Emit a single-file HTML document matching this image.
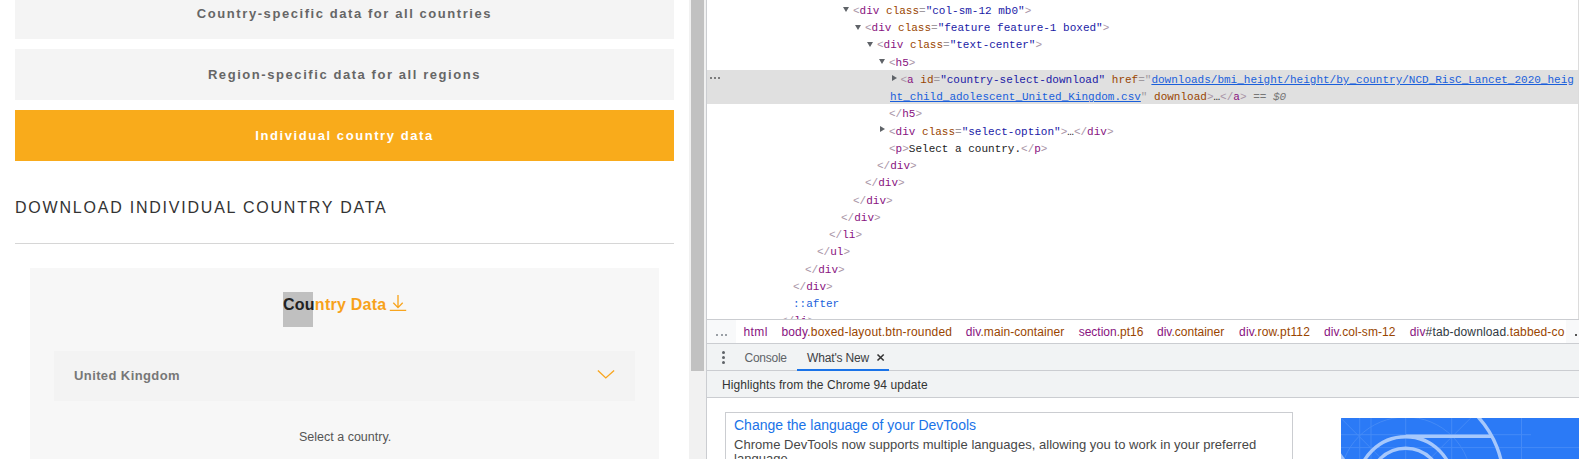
<!DOCTYPE html>
<html><head><meta charset="utf-8">
<style>
*{margin:0;padding:0;box-sizing:border-box}
html,body{width:1579px;height:459px;overflow:hidden;background:#fff;position:relative;font-family:"Liberation Sans",sans-serif}
.abs{position:absolute}
/* left page */
.btn{position:absolute;left:15px;width:659px;height:51px;background:#f4f4f4}
.btn span{position:absolute;left:0;right:0;text-align:center;font-weight:bold;font-size:13px;letter-spacing:1.57px;color:#666;white-space:nowrap;line-height:14px}
.btn.on{background:#f9ab1b}
.btn.on span{color:#fff}
.h4{position:absolute;left:15px;top:198px;font-size:16px;letter-spacing:1.78px;color:#333;line-height:20px;white-space:nowrap}
.hr{position:absolute;left:15px;top:243px;width:659px;height:1px;background:#d6d6d6}
.panel{position:absolute;left:30px;top:268px;width:629px;height:191px;background:#f7f7f7}
.sel{position:absolute;left:54px;top:351px;width:581px;height:50px;background:#f3f3f3}
/* scrollbar */
.sb{position:absolute;left:689px;top:0;width:17px;height:459px;background:#f1f1f1}
.thumb{position:absolute;left:691px;top:0;width:13px;height:371px;background:#c1c1c1}
.dvb{position:absolute;left:706px;top:0;width:1px;height:459px;background:#cbcdd1}
/* devtools tree */
.row{position:absolute;font-family:"Liberation Mono",monospace;font-size:11px;line-height:14px;white-space:pre;color:#222}
.b{color:#a894a6}
.t{color:#881280}
.an{color:#994500}
.eq{color:#a09a9f}
.av{color:#1a1aa6}
.lk{color:#1a5fdb;text-decoration:underline}
.eq2{color:#777}
.eq2 i{font-style:italic}
.ps{color:#1a5fdb}
.tx{color:#222}
.tri-d{position:absolute;width:0;height:0;border-left:3.4px solid transparent;border-right:3.4px solid transparent;border-top:5.2px solid #5f6368}
.tri-r{position:absolute;width:0;height:0;border-top:3.7px solid transparent;border-bottom:3.7px solid transparent;border-left:5.3px solid #5f6368}
.selrow{position:absolute;left:707px;top:70px;width:871px;height:34px;background:#e0e0e0}
.ui{position:absolute;font-size:12px;line-height:14px;white-space:nowrap}
</style></head><body>

<!-- LEFT PAGE -->
<div class="btn" style="top:-12px"><span style="top:19px">Country-specific data for all countries</span></div>
<div class="btn" style="top:49px"><span style="top:19px">Region-specific data for all regions</span></div>
<div class="btn on" style="top:110px"><span style="top:19px">Individual country data</span></div>
<div class="h4">DOWNLOAD INDIVIDUAL COUNTRY DATA</div>
<div class="hr"></div>
<div class="panel"></div>
<div class="abs" style="left:283px;top:292px;width:30px;height:35px;background:#c0c0c0"></div>
<div class="abs" style="left:283px;top:296px;font-size:16px;font-weight:bold;line-height:18px;letter-spacing:0.25px;color:#f7a21b;white-space:nowrap"><span style="color:#222">Cou</span>ntry Data</div>
<svg class="abs" style="left:388px;top:293px" width="20" height="20" viewBox="0 0 20 20"><path d="M10 2V14.6M5.3 9.8L10 14.6L14.7 9.8M1.8 17.4H18.2" stroke="#f8a51f" stroke-width="1.35" fill="none"/></svg>
<div class="sel"></div>
<div class="abs" style="left:74px;top:369px;font-size:13px;font-weight:bold;line-height:14px;color:#777;letter-spacing:0.4px;white-space:nowrap">United Kingdom</div>
<svg class="abs" style="left:596px;top:368px" width="20" height="12" viewBox="0 0 20 12"><path d="M1.9 2.4L9.8 9.9L18.1 2.4" stroke="#f8a51f" stroke-width="1.35" fill="none"/></svg>
<div class="abs" style="left:299px;top:430px;font-size:12.5px;line-height:14px;color:#555;white-space:nowrap">Select a country.</div>

<!-- SCROLLBAR -->
<div class="sb"></div>
<div class="thumb"></div>
<div class="dvb"></div>

<!-- DEVTOOLS -->
<div class="selrow"></div>
<div class="abs" style="left:709.5px;top:77.4px;width:2px;height:2px;border-radius:50%;background:#5a5a5a"></div>
<div class="abs" style="left:713.6px;top:77.4px;width:2px;height:2px;border-radius:50%;background:#5a5a5a"></div>
<div class="abs" style="left:717.7px;top:77.4px;width:2px;height:2px;border-radius:50%;background:#5a5a5a"></div>
<div class="row" style="left:853.0px;top:3.97px"><span class="b">&lt;</span><span class="t">div</span> <span class="an">class</span><span class="eq">=</span><span class="av">"col-sm-12 mb0"</span><span class="b">&gt;</span></div>
<div class="tri-d" style="left:843.0px;top:7.40px"></div>
<div class="row" style="left:865.0px;top:21.22px"><span class="b">&lt;</span><span class="t">div</span> <span class="an">class</span><span class="eq">=</span><span class="av">"feature feature-1 boxed"</span><span class="b">&gt;</span></div>
<div class="tri-d" style="left:855.0px;top:24.65px"></div>
<div class="row" style="left:877.0px;top:38.47px"><span class="b">&lt;</span><span class="t">div</span> <span class="an">class</span><span class="eq">=</span><span class="av">"text-center"</span><span class="b">&gt;</span></div>
<div class="tri-d" style="left:867.0px;top:41.90px"></div>
<div class="row" style="left:889.0px;top:55.72px"><span class="b">&lt;</span><span class="t">h5</span><span class="b">&gt;</span></div>
<div class="tri-d" style="left:879.0px;top:59.15px"></div>
<div class="row" style="left:900.5px;top:72.97px"><span class="b">&lt;</span><span class="t">a</span> <span class="an">id</span><span class="eq">=</span><span class="av">"country-select-download"</span> <span class="an">href</span><span class="eq">="</span><span class="lk">downloads/bmi_height/height/by_country/NCD_RisC_Lancet_2020_heig</span></div>
<div class="tri-r" style="left:891.5px;top:74.60px"></div>
<div class="row" style="left:890.0px;top:90.22px"><span class="lk">ht_child_adolescent_United_Kingdom.csv</span><span class="eq">"</span> <span class="an">download</span><span class="b">&gt;</span>…<span class="b">&lt;/</span><span class="t">a</span><span class="b">&gt;</span> <span class="eq2">== <i>$0</i></span></div>
<div class="row" style="left:889.0px;top:107.47px"><span class="b">&lt;/</span><span class="t">h5</span><span class="b">&gt;</span></div>
<div class="row" style="left:889.0px;top:124.72px"><span class="b">&lt;</span><span class="t">div</span> <span class="an">class</span><span class="eq">=</span><span class="av">"select-option"</span><span class="b">&gt;</span>…<span class="b">&lt;/</span><span class="t">div</span><span class="b">&gt;</span></div>
<div class="tri-r" style="left:880.0px;top:126.35px"></div>
<div class="row" style="left:889.0px;top:141.97px"><span class="b">&lt;</span><span class="t">p</span><span class="b">&gt;</span><span class="tx">Select a country.</span><span class="b">&lt;/</span><span class="t">p</span><span class="b">&gt;</span></div>
<div class="row" style="left:877.0px;top:159.22px"><span class="b">&lt;/</span><span class="t">div</span><span class="b">&gt;</span></div>
<div class="row" style="left:865.0px;top:176.47px"><span class="b">&lt;/</span><span class="t">div</span><span class="b">&gt;</span></div>
<div class="row" style="left:853.0px;top:193.72px"><span class="b">&lt;/</span><span class="t">div</span><span class="b">&gt;</span></div>
<div class="row" style="left:841.0px;top:210.97px"><span class="b">&lt;/</span><span class="t">div</span><span class="b">&gt;</span></div>
<div class="row" style="left:829.0px;top:228.22px"><span class="b">&lt;/</span><span class="t">li</span><span class="b">&gt;</span></div>
<div class="row" style="left:817.0px;top:245.47px"><span class="b">&lt;/</span><span class="t">ul</span><span class="b">&gt;</span></div>
<div class="row" style="left:805.0px;top:262.72px"><span class="b">&lt;/</span><span class="t">div</span><span class="b">&gt;</span></div>
<div class="row" style="left:793.0px;top:279.97px"><span class="b">&lt;/</span><span class="t">div</span><span class="b">&gt;</span></div>
<div class="row" style="left:793.0px;top:297.22px"><span class="ps">::after</span></div>
<div class="row" style="left:781.0px;top:314.47px"><span class="b">&lt;/</span><span class="t">li</span><span class="b">&gt;</span></div>
<div class="abs" style="left:1578px;top:0;width:1px;height:319px;background:#dcdcdc"></div>

<!-- breadcrumbs -->
<div class="abs" style="left:707px;top:319px;width:872px;height:1px;background:#cbcdd1"></div>
<div class="abs" style="left:707px;top:320px;width:872px;height:23px;background:#fff"></div>
<div class="abs" style="left:707px;top:320px;width:29px;height:23px;background:#f8f9fa"></div>
<div class="abs" style="left:716px;top:334px;width:2px;height:2px;background:#9aa0a6"></div><div class="abs" style="left:720.5px;top:334px;width:2px;height:2px;background:#9aa0a6"></div><div class="abs" style="left:725px;top:334px;width:2px;height:2px;background:#9aa0a6"></div>
<div class="ui" style="left:743.6px;top:325px;letter-spacing:0.35px"><span style="color:#881280">html</span></div>
<div class="ui" style="left:781.4px;top:325px;letter-spacing:0.19px"><span style="color:#881280">body</span><span style="color:#994500">.boxed-layout.btn-rounded</span></div>
<div class="ui" style="left:965.7px;top:325px;letter-spacing:0.08px"><span style="color:#881280">div</span><span style="color:#994500">.main-container</span></div>
<div class="ui" style="left:1078.7px;top:325px;letter-spacing:0px"><span style="color:#881280">section</span><span style="color:#994500">.pt16</span></div>
<div class="ui" style="left:1157.0px;top:325px;letter-spacing:0px"><span style="color:#881280">div</span><span style="color:#994500">.container</span></div>
<div class="ui" style="left:1239.1px;top:325px;letter-spacing:0.15px"><span style="color:#881280">div</span><span style="color:#994500">.row.pt112</span></div>
<div class="ui" style="left:1324.1px;top:325px;letter-spacing:0.08px"><span style="color:#881280">div</span><span style="color:#994500">.col-sm-12</span></div>
<div class="ui" style="left:1409.8px;top:325px;letter-spacing:0.15px"><span style="color:#881280">div</span><span style="color:#303942">#tab-download</span><span style="color:#994500">.tabbed-co</span></div>
<div class="abs" style="left:1566px;top:320px;width:13px;height:23px;background:#f8f9fa"></div>
<div class="abs" style="left:1575px;top:334px;width:2px;height:2px;background:#555"></div>
<div class="abs" style="left:707px;top:343px;width:872px;height:1px;background:#cbcdd1"></div>

<!-- drawer tabbar -->
<div class="abs" style="left:707px;top:344px;width:872px;height:26px;background:#f1f3f4"></div>
<div class="abs" style="left:722px;top:351px;width:3px;height:3px;border-radius:50%;background:#5f6368"></div>
<div class="abs" style="left:722px;top:356px;width:3px;height:3px;border-radius:50%;background:#5f6368"></div>
<div class="abs" style="left:722px;top:361px;width:3px;height:3px;border-radius:50%;background:#5f6368"></div>
<div class="ui" style="left:744.5px;top:351px;color:#5f6368;letter-spacing:-0.25px">Console</div>
<div class="ui" style="left:807px;top:351px;color:#3c4043;letter-spacing:-0.15px">What's New</div>
<svg class="abs" style="left:876px;top:353px" width="9" height="9" viewBox="0 0 9 9"><path d="M1.5 1.5L7.7 7.5M7.7 1.5L1.5 7.5" stroke="#333" stroke-width="1.6"/></svg>
<div class="abs" style="left:707px;top:370px;width:872px;height:1px;background:#cbcdd1"></div>
<div class="abs" style="left:797px;top:369px;width:92px;height:2px;background:#1a73e8"></div>

<!-- whats new header -->
<div class="abs" style="left:707px;top:371px;width:872px;height:26px;background:#f1f3f4"></div>
<div class="ui" style="left:722px;top:378px;color:#333;letter-spacing:0.08px">Highlights from the Chrome 94 update</div>
<div class="abs" style="left:707px;top:397px;width:872px;height:1px;background:#cbcdd1"></div>

<!-- content -->
<div class="abs" style="left:725px;top:412px;width:568px;height:60px;border:1px solid #cbcdd1;background:#fff"></div>
<div class="ui" style="left:734px;top:417.4px;font-size:14px;line-height:16px;color:#1a73e8">Change the language of your DevTools</div>
<div class="ui" style="left:734px;top:438px;font-size:13px;line-height:13.5px;color:#474747;letter-spacing:0.03px">Chrome DevTools now supports multiple languages, allowing you to work in your preferred<br>language</div>
<svg class="abs" style="left:1341px;top:418px" width="238" height="41" viewBox="0 0 238 41">
  <rect width="238" height="41" fill="#2b7af6"/>
  <g stroke="#5596f8" stroke-width="1" fill="none" opacity="0.6">
    <path d="M18.7 0V41M30 0V41M64.7 0V41M110.7 0V41M180.5 0V41"/>
    <path d="M0 16.7H190M0 29.6H238"/>
    <path d="M-0.3 0L41 41.3M129.7 0L88.7 41"/>
    <circle cx="64.7" cy="65" r="66"/>
  </g>
  <g stroke="#a6c8fc" stroke-width="3.4" fill="none">
    <circle cx="64.7" cy="66.5" r="47.8"/>
    <circle cx="64.7" cy="66.5" r="36.3"/>
    <circle cx="64.7" cy="65" r="98"/>
    <path d="M64.7 18.2H151"/>
  </g>
  <path d="M0 35.3L4 41H0Z" fill="#a3c5fb"/>
</svg>

</body></html>
